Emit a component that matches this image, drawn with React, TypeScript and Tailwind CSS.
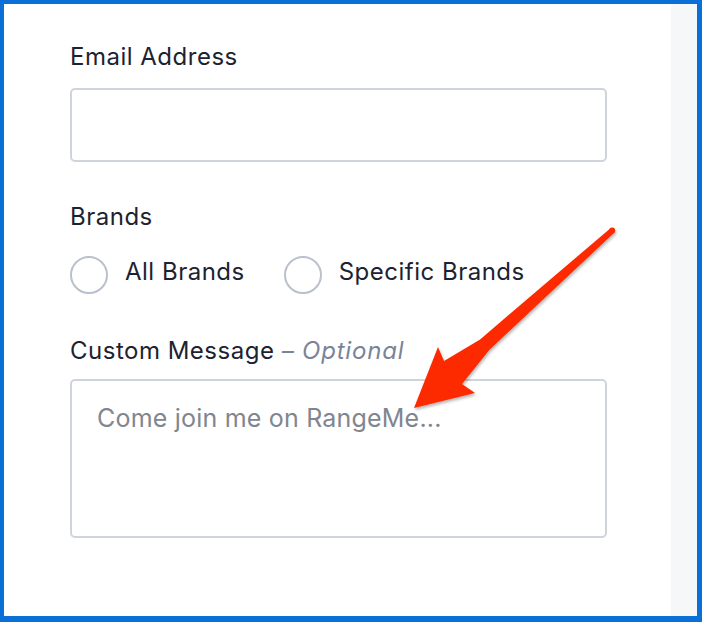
import React from "react";

const font = { fontFamily: "Inter, 'Open Sans', sans-serif" };

const Radio: React.FC<{ label: string }> = ({ label }) => (
  <label className="flex items-center gap-[17px]">
    <span className="w-[38px] h-[38px] rounded-full border-2 border-[#bac0cc] bg-white" />
    <span className="text-[24px] leading-[32px] tracking-[0.5px] text-[#1d2232] -mt-[6px]">{label}</span>
  </label>
);

const Arrow = () => (
  <svg
    className="absolute left-0 top-0 pointer-events-none"
    width="702"
    height="622"
    viewBox="0 0 702 622"
  >
    <defs>
      <filter id="sh" x="-20%" y="-20%" width="140%" height="140%">
        <feDropShadow dx="1" dy="2" stdDeviation="1.5" floodColor="#000" floodOpacity="0.3" />
      </filter>
    </defs>
    <g filter="url(#sh)" fill="#fd2a06">
      <polygon points="410,404 471,389 458,380 485.5,345.8 610.2,228.8 606.2,224.4 476.1,335.4 440,357 434,343" />
      <circle cx="608.2" cy="226.6" r="3" />
    </g>
  </svg>
);

export default function App() {
  return (
    <div
      className="relative w-[702px] h-[622px] border-solid border-[#0a70d8] border-t-[4px] border-l-[4px] border-r-[5px] border-b-[6px] flex bg-white"
      style={font}
    >
      <div className="w-[667px] bg-white pl-[66px] pt-[37px] flex flex-col">
        <div className="text-[24px] leading-[32px] tracking-[0.5px] text-[#1d2232]">Email Address</div>
        <div className="mt-[15px] w-[537px] h-[74px] rounded-[5px] border-2 border-[#cfd3db] bg-white" />

        <div className="mt-[39px] text-[24px] leading-[32px] tracking-[0.5px] text-[#1d2232]">Brands</div>
        <div className="mt-[23px] flex items-center gap-[39px]">
          <Radio label="All Brands" />
          <Radio label="Specific Brands" />
        </div>

        <div className="mt-[41px] text-[24px] leading-[32px] tracking-[0.5px] text-[#1d2232]">
          Custom Message <span className="text-[#7a8499] italic tracking-[0.8px]">– Optional</span>
        </div>
        <div className="mt-[12px] w-[537px] h-[159px] rounded-[5px] border-2 border-[#cfd3db] bg-white pl-[25px] pt-[21px]">
          <div className="text-[25px] leading-[32px] tracking-[0.2px] text-[#80868f]">Come join me on RangeMe...</div>
        </div>
      </div>
      <div className="flex-1 bg-[#f6f7f9]" />
      <Arrow />
    </div>
  );
}
